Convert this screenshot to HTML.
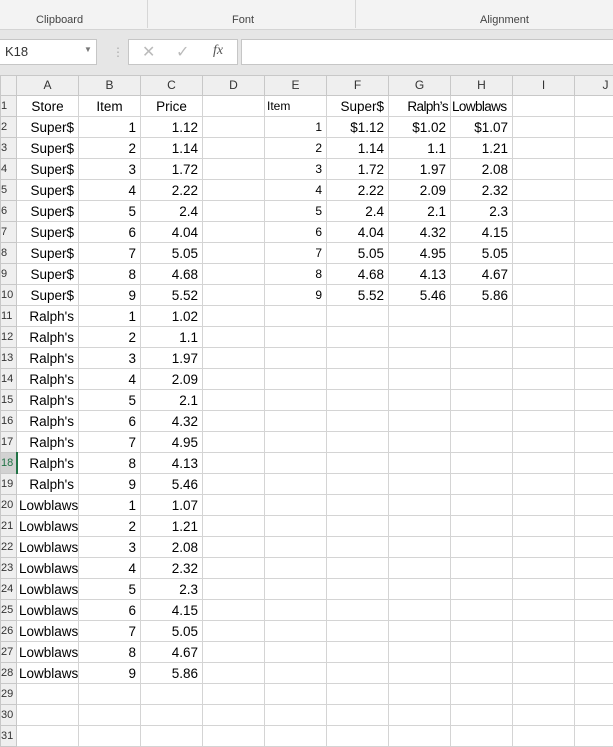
<!DOCTYPE html><html><head><style>
body{margin:0;width:613px;height:746px;overflow:hidden;background:#fff;font-family:"Liberation Sans",Calibri,sans-serif;position:relative}
.a{position:absolute}
.rib{left:0;top:0;width:613px;height:29px;background:#f3f3f3;border-bottom:1px solid #d4d4d4}
.lab{top:14px;font-size:11px;color:#444}
.fb{left:0;top:30px;width:613px;height:46px;background:#e6e6e6}
.box{background:#fff;border:1px solid #c6c6c6;height:24px;top:39px}
table{position:absolute;left:0;top:75px;border-collapse:collapse;table-layout:fixed;width:636px;font-size:13.5px}
tr{height:21px}
tr.h{height:19px}
td{border:1px solid #d4d4d4;padding:0 4px;white-space:nowrap;overflow:hidden;line-height:19px}
tr.h td{background:#efefef;text-align:center;font-size:12px;color:#333;border-color:#c8c8c8}
td.rh{background:#efefef;color:#333;font-size:11px;padding:0;text-align:left;border-color:#c8c8c8}
.r{text-align:right}.c{text-align:center}
.s{letter-spacing:-0.6px}
</style></head><body>
<div class="a rib"></div>
<div class="a lab" style="left:36px">Clipboard</div>
<div class="a lab" style="left:232px">Font</div>
<div class="a lab" style="left:480px">Alignment</div>
<div class="a" style="left:147px;top:0;width:1px;height:28px;background:#d6d6d6"></div>
<div class="a" style="left:355px;top:0;width:1px;height:28px;background:#d6d6d6"></div>
<div class="a fb"></div>
<div class="a box" style="left:-1px;width:96px"><span style="position:absolute;left:5px;top:4px;font-size:13px;color:#333">K18</span><span style="position:absolute;left:84px;top:5px;font-size:8px;color:#777">▼</span></div>
<div class="a" style="left:112px;top:45px;color:#aaa;font-size:12px">⋮</div>
<div class="a box" style="left:128px;width:108px"><span style="position:absolute;left:13px;top:2px;color:#bbb;font-size:16px">✕</span><span style="position:absolute;left:47px;top:2px;color:#bbb;font-size:16px">✓</span><span style="position:absolute;left:84px;top:3px;color:#555;font-style:italic;font-family:'Liberation Serif',serif;font-size:14px">fx</span></div>
<div class="a box" style="left:241px;width:380px"></div>
<table>
<colgroup><col style="width:16px"><col style="width:62px"><col style="width:62px"><col style="width:62px"><col style="width:62px"><col style="width:62px"><col style="width:62px"><col style="width:62px"><col style="width:62px"><col style="width:62px"><col style="width:62px"></colgroup>
<tr class="h"><td style="padding:0"></td><td>A</td><td>B</td><td>C</td><td>D</td><td>E</td><td>F</td><td>G</td><td>H</td><td>I</td><td>J</td></tr>
<tr><td class="rh">1</td><td class="c">Store</td><td class="c">Item</td><td class="c">Price</td><td></td><td style="font-size:12px;padding-left:2px">Item</td><td class="r">Super$</td><td class="r s" style="padding-right:2px">Ralph’s</td><td class="s" style="padding:0 1px">Lowblaws</td><td></td><td></td></tr>
<tr><td class="rh">2</td><td class="r">Super$</td><td class="r">1</td><td class="r">1.12</td><td></td><td class="r" style="font-size:12px">1</td><td class="r">$1.12</td><td class="r">$1.02</td><td class="r">$1.07</td><td></td><td></td></tr>
<tr><td class="rh">3</td><td class="r">Super$</td><td class="r">2</td><td class="r">1.14</td><td></td><td class="r" style="font-size:12px">2</td><td class="r">1.14</td><td class="r">1.1</td><td class="r">1.21</td><td></td><td></td></tr>
<tr><td class="rh">4</td><td class="r">Super$</td><td class="r">3</td><td class="r">1.72</td><td></td><td class="r" style="font-size:12px">3</td><td class="r">1.72</td><td class="r">1.97</td><td class="r">2.08</td><td></td><td></td></tr>
<tr><td class="rh">5</td><td class="r">Super$</td><td class="r">4</td><td class="r">2.22</td><td></td><td class="r" style="font-size:12px">4</td><td class="r">2.22</td><td class="r">2.09</td><td class="r">2.32</td><td></td><td></td></tr>
<tr><td class="rh">6</td><td class="r">Super$</td><td class="r">5</td><td class="r">2.4</td><td></td><td class="r" style="font-size:12px">5</td><td class="r">2.4</td><td class="r">2.1</td><td class="r">2.3</td><td></td><td></td></tr>
<tr><td class="rh">7</td><td class="r">Super$</td><td class="r">6</td><td class="r">4.04</td><td></td><td class="r" style="font-size:12px">6</td><td class="r">4.04</td><td class="r">4.32</td><td class="r">4.15</td><td></td><td></td></tr>
<tr><td class="rh">8</td><td class="r">Super$</td><td class="r">7</td><td class="r">5.05</td><td></td><td class="r" style="font-size:12px">7</td><td class="r">5.05</td><td class="r">4.95</td><td class="r">5.05</td><td></td><td></td></tr>
<tr><td class="rh">9</td><td class="r">Super$</td><td class="r">8</td><td class="r">4.68</td><td></td><td class="r" style="font-size:12px">8</td><td class="r">4.68</td><td class="r">4.13</td><td class="r">4.67</td><td></td><td></td></tr>
<tr><td class="rh">10</td><td class="r">Super$</td><td class="r">9</td><td class="r">5.52</td><td></td><td class="r" style="font-size:12px">9</td><td class="r">5.52</td><td class="r">5.46</td><td class="r">5.86</td><td></td><td></td></tr>
<tr><td class="rh">11</td><td class="r">Ralph's</td><td class="r">1</td><td class="r">1.02</td><td></td><td></td><td></td><td></td><td></td><td></td><td></td></tr>
<tr><td class="rh">12</td><td class="r">Ralph's</td><td class="r">2</td><td class="r">1.1</td><td></td><td></td><td></td><td></td><td></td><td></td><td></td></tr>
<tr><td class="rh">13</td><td class="r">Ralph's</td><td class="r">3</td><td class="r">1.97</td><td></td><td></td><td></td><td></td><td></td><td></td><td></td></tr>
<tr><td class="rh">14</td><td class="r">Ralph's</td><td class="r">4</td><td class="r">2.09</td><td></td><td></td><td></td><td></td><td></td><td></td><td></td></tr>
<tr><td class="rh">15</td><td class="r">Ralph's</td><td class="r">5</td><td class="r">2.1</td><td></td><td></td><td></td><td></td><td></td><td></td><td></td></tr>
<tr><td class="rh">16</td><td class="r">Ralph's</td><td class="r">6</td><td class="r">4.32</td><td></td><td></td><td></td><td></td><td></td><td></td><td></td></tr>
<tr><td class="rh">17</td><td class="r">Ralph's</td><td class="r">7</td><td class="r">4.95</td><td></td><td></td><td></td><td></td><td></td><td></td><td></td></tr>
<tr><td class="rh" style="background:#d2d2d2;color:#217346;border-right:2px solid #217346">18</td><td class="r">Ralph's</td><td class="r">8</td><td class="r">4.13</td><td></td><td></td><td></td><td></td><td></td><td></td><td></td></tr>
<tr><td class="rh">19</td><td class="r">Ralph's</td><td class="r">9</td><td class="r">5.46</td><td></td><td></td><td></td><td></td><td></td><td></td><td></td></tr>
<tr><td class="rh">20</td><td class="r" style="padding:0 2px">Lowblaws</td><td class="r">1</td><td class="r">1.07</td><td></td><td></td><td></td><td></td><td></td><td></td><td></td></tr>
<tr><td class="rh">21</td><td class="r" style="padding:0 2px">Lowblaws</td><td class="r">2</td><td class="r">1.21</td><td></td><td></td><td></td><td></td><td></td><td></td><td></td></tr>
<tr><td class="rh">22</td><td class="r" style="padding:0 2px">Lowblaws</td><td class="r">3</td><td class="r">2.08</td><td></td><td></td><td></td><td></td><td></td><td></td><td></td></tr>
<tr><td class="rh">23</td><td class="r" style="padding:0 2px">Lowblaws</td><td class="r">4</td><td class="r">2.32</td><td></td><td></td><td></td><td></td><td></td><td></td><td></td></tr>
<tr><td class="rh">24</td><td class="r" style="padding:0 2px">Lowblaws</td><td class="r">5</td><td class="r">2.3</td><td></td><td></td><td></td><td></td><td></td><td></td><td></td></tr>
<tr><td class="rh">25</td><td class="r" style="padding:0 2px">Lowblaws</td><td class="r">6</td><td class="r">4.15</td><td></td><td></td><td></td><td></td><td></td><td></td><td></td></tr>
<tr><td class="rh">26</td><td class="r" style="padding:0 2px">Lowblaws</td><td class="r">7</td><td class="r">5.05</td><td></td><td></td><td></td><td></td><td></td><td></td><td></td></tr>
<tr><td class="rh">27</td><td class="r" style="padding:0 2px">Lowblaws</td><td class="r">8</td><td class="r">4.67</td><td></td><td></td><td></td><td></td><td></td><td></td><td></td></tr>
<tr><td class="rh">28</td><td class="r" style="padding:0 2px">Lowblaws</td><td class="r">9</td><td class="r">5.86</td><td></td><td></td><td></td><td></td><td></td><td></td><td></td></tr>
<tr><td class="rh">29</td><td></td><td></td><td></td><td></td><td></td><td></td><td></td><td></td><td></td><td></td></tr>
<tr><td class="rh">30</td><td></td><td></td><td></td><td></td><td></td><td></td><td></td><td></td><td></td><td></td></tr>
<tr><td class="rh">31</td><td></td><td></td><td></td><td></td><td></td><td></td><td></td><td></td><td></td><td></td></tr>
</table>
</body></html>
